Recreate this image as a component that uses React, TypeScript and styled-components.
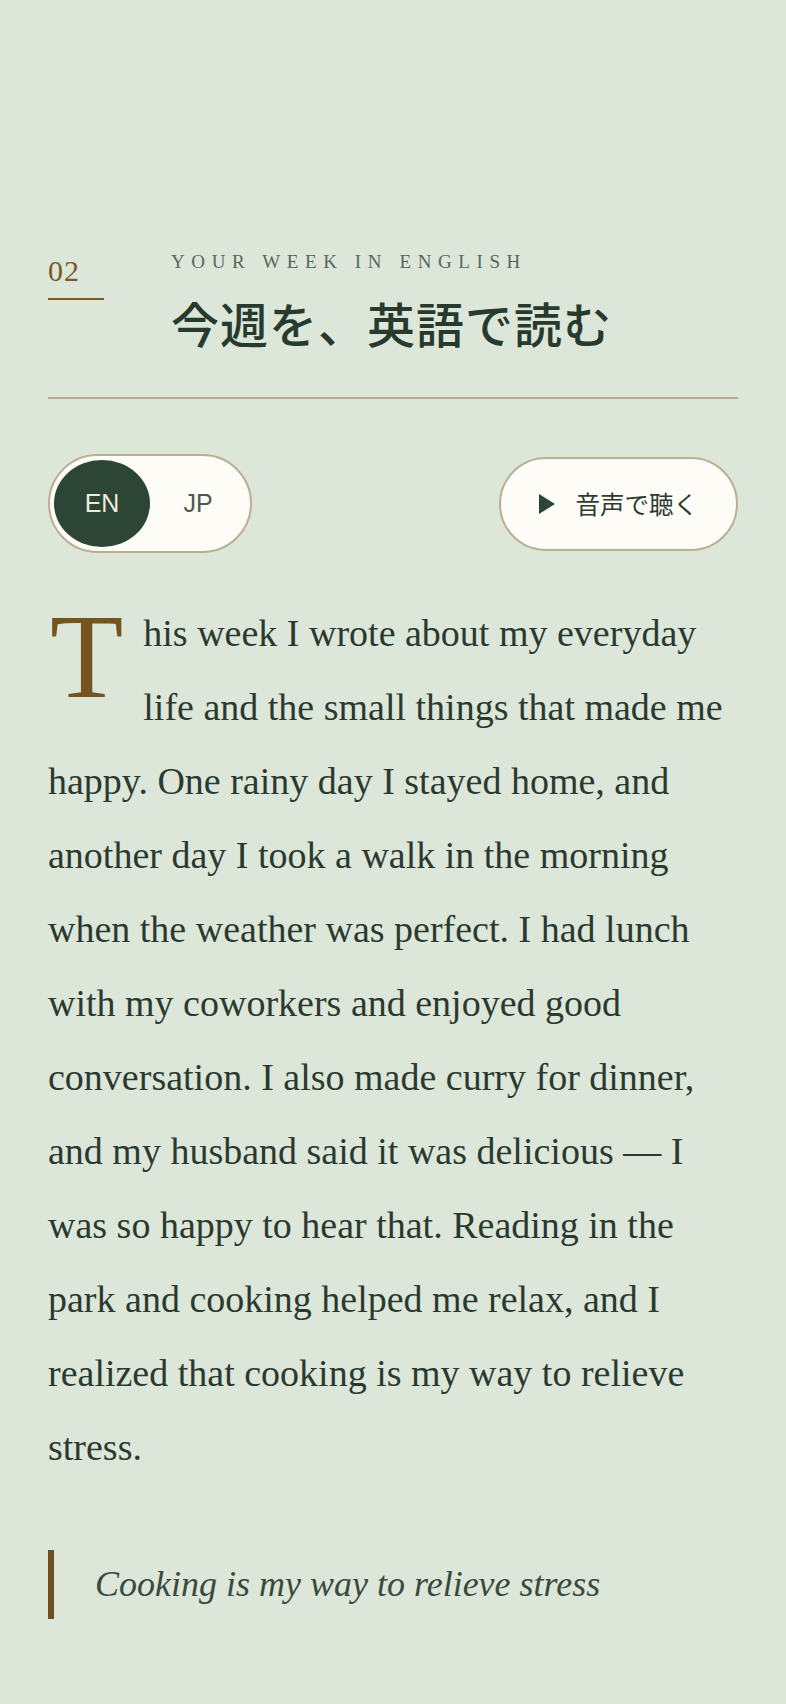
import React, { useState } from "react";
import styled, { createGlobalStyle } from "styled-components";

const GlobalStyle = createGlobalStyle`
  html, body {
    margin: 0;
    padding: 0;
    background: #dce6d9;
  }
  body {
    min-height: 100vh;
    font-family: "Liberation Serif", "Times New Roman", serif;
    -webkit-font-smoothing: antialiased;
  }
  * { box-sizing: border-box; }
`;

const Page = styled.main`
  min-height: 1704px;
  background: #dce6d9;
  padding: 250px 48px 80px;
`;

const Header = styled.header`
  display: grid;
  grid-template-columns: 56px 1fr;
  column-gap: 67px;
  align-items: start;
`;

const NumberCol = styled.div`
  display: flex;
  flex-direction: column;
  padding-top: 3px;
`;

const Number = styled.span`
  font-family: "Liberation Serif", serif;
  font-size: 30px;
  line-height: 36px;
  color: #7a5a26;
  letter-spacing: 1px;
`;

const NumberRule = styled.span`
  display: block;
  width: 56px;
  height: 2px;
  margin-top: 9px;
  background: #7a5a26;
`;

const TitleCol = styled.div`
  display: flex;
  flex-direction: column;
`;

const Eyebrow = styled.span`
  font-family: "Liberation Serif", serif;
  font-size: 19px;
  line-height: 23px;
  letter-spacing: 6.6px;
  color: #58675b;
  text-transform: uppercase;
`;

const Title = styled.h1`
  margin: 16px 0 0;
  font-family: "Noto Sans CJK JP", "Noto Sans", sans-serif;
  font-weight: 500;
  font-size: 48px;
  line-height: 67px;
  letter-spacing: 1px;
  color: #263a2e;
`;

const Divider = styled.hr`
  margin: 41px 0 0;
  border: none;
  height: 2px;
  background: #b7a98d;
`;

const Controls = styled.div`
  margin-top: 55px;
  display: flex;
  align-items: center;
  justify-content: space-between;
`;

const Toggle = styled.div`
  display: flex;
  padding: 4px;
  border: 2px solid #bcae93;
  border-radius: 999px;
  background: #fdfcf6;
`;

const ToggleOption = styled.button<{ $active: boolean }>`
  width: 96px;
  height: 87px;
  border: none;
  border-radius: 50%;
  padding: 0;
  cursor: pointer;
  font-family: "Liberation Sans", Arial, sans-serif;
  font-size: 25px;
  background: ${(p) => (p.$active ? "#2d4535" : "transparent")};
  color: ${(p) => (p.$active ? "#efeadb" : "#4c5b50")};
`;

const PlayButton = styled.button`
  height: 94px;
  display: flex;
  align-items: center;
  gap: 21px;
  padding: 0 38px 0 38px;
  border: 2px solid #bcae93;
  border-radius: 999px;
  background: #fdfcf6;
  cursor: pointer;
  font-family: "Noto Sans CJK JP", "Noto Sans", sans-serif;
  font-size: 24.5px;
  color: #2c3a31;
`;

const PlayIcon = styled.svg`
  width: 16px;
  height: 20px;
  flex: none;
`;

const Body = styled.p`
  margin: 43px 0 0;
  font-family: "Liberation Serif", "Times New Roman", serif;
  font-size: 38px;
  line-height: 74px;
  color: #2b3a30;

  &::first-letter {
    float: left;
    font-size: 120px;
    line-height: 96px;
    margin: 13px 20px 0 2px;
    color: #74551f;
  }
`;

const Quote = styled.blockquote`
  margin: 66px 0 0;
  padding: 0 0 0 41px;
  border-left: 6px solid #6e5023;
  font-family: "Liberation Serif", "Times New Roman", serif;
  font-style: italic;
  font-size: 36px;
  line-height: 69px;
  color: #3a4a3f;
`;

export default function App() {
  const [lang, setLang] = useState<"EN" | "JP">("EN");
  return (
    <>
      <GlobalStyle />
      <Page>
        <Header>
          <NumberCol>
            <Number>02</Number>
            <NumberRule />
          </NumberCol>
          <TitleCol>
            <Eyebrow>Your Week in English</Eyebrow>
            <Title>今週を、英語で読む</Title>
          </TitleCol>
        </Header>
        <Divider />
        <Controls>
          <Toggle>
            <ToggleOption $active={lang === "EN"} onClick={() => setLang("EN")}>
              EN
            </ToggleOption>
            <ToggleOption $active={lang === "JP"} onClick={() => setLang("JP")}>
              JP
            </ToggleOption>
          </Toggle>
          <PlayButton>
            <PlayIcon viewBox="0 0 16 20">
              <path d="M0 0 L16 10 L0 20 Z" fill="#2d4535" />
            </PlayIcon>
            音声で聴く
          </PlayButton>
        </Controls>
        <Body>
          This week I wrote about my everyday life and the small things that made me
          happy. One rainy day I stayed home, and another day I took a walk in the
          morning when the weather was perfect. I had lunch with my coworkers and
          enjoyed good conversation. I also made curry for dinner, and my husband
          said it was delicious — I was so happy to hear that. Reading in the park
          and cooking helped me relax, and I realized that cooking is my way to
          relieve stress.
        </Body>
        <Quote>Cooking is my way to relieve stress</Quote>
      </Page>
    </>
  );
}
